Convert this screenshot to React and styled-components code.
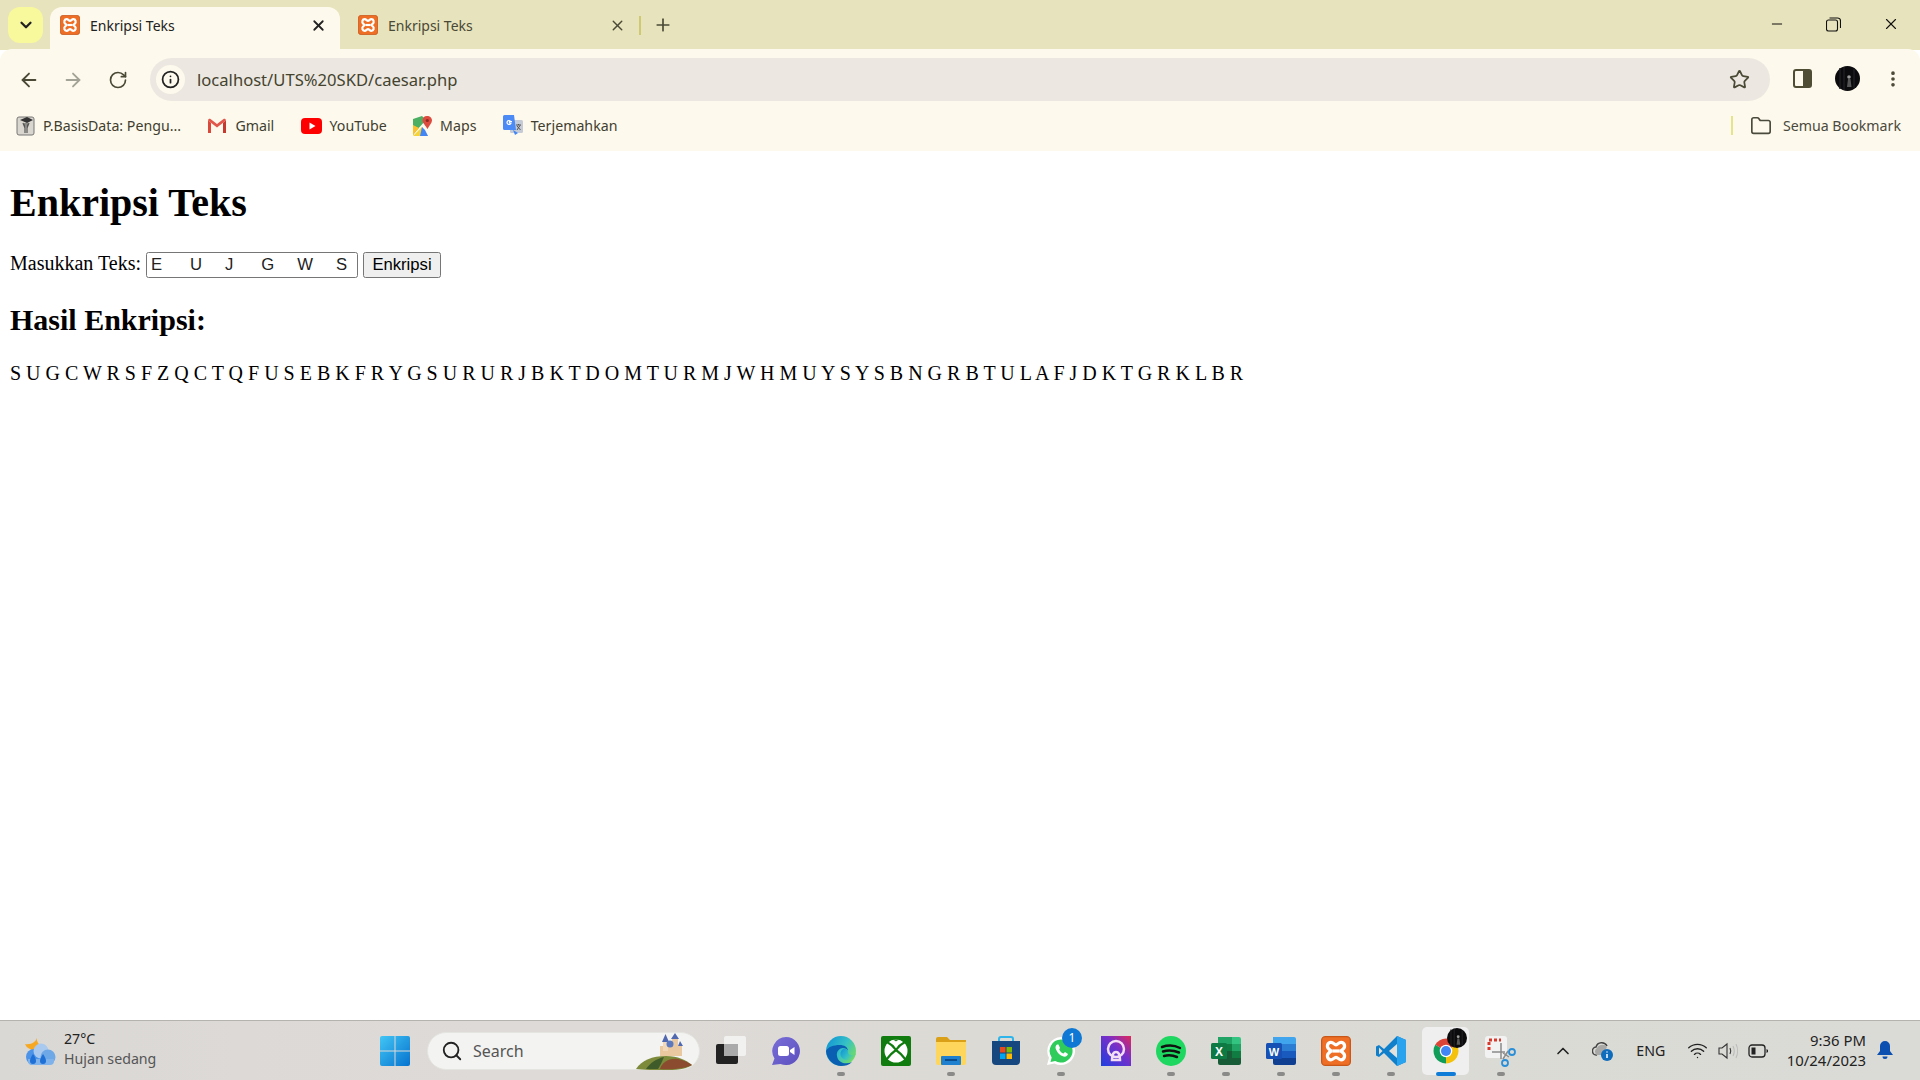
import React from 'react';
import styled, { createGlobalStyle } from 'styled-components';
import {
  ArrowLeft, ArrowRight, RotateCw, Info, Star, X, Plus, ChevronDown, ChevronUp,
  Minus, Folder, Search, Wifi, EllipsisVertical,
} from 'lucide-react';

const GlobalStyle = createGlobalStyle`
  html, body { margin: 0; padding: 0; height: 100%; background: #fff; }
  body { font-family: "Liberation Serif", "Times New Roman", serif; font-size: 20px; color: #000; }
  #root { height: 100%; }
`;

const UI_FONT = '"Noto Sans", "Open Sans", sans-serif';
const OUTPUT = 'S U G C W R S F Z Q C T Q F U S E B K F R Y G S U R U R J B K T D O M T U R M J W H M U Y S Y S B N G R B T U L A F J D K T G R K L B R';

/* ---------- drawn icons ---------- */

const Xampp = ({ size }) => (
  <svg width={size} height={size} viewBox="0 0 24 24">
    <rect x="0.5" y="0.5" width="23" height="23" rx="3" fill="#EE6E25" stroke="#C9571A" />
    <path d="M8 5c2 0 2.500 2 4 2s2-2 4-2c2.800 0 3.800 3.500 1.700 5.500-.8.8-1.700 1-1.700 1.500s.9.7 1.700 1.500c2.100 2 1.100 5.500-1.700 5.500-2 0-2.500-2-4-2s-2 2-4 2c-2.800 0-3.800-3.500-1.700-5.500.8-.8 1.700-1 1.700-1.500s-.9-.7-1.700-1.500C4.200 8.500 5.200 5 8 5Z" fill="none" stroke="#fff" strokeWidth="2.600" />
    <path d="M9 12h6" stroke="#fff" strokeWidth="2.600" />
  </svg>
);

const Scholar = () => (
  <svg width="19" height="21" viewBox="0 0 19 21">
    <rect x="1" y="2" width="17" height="18" rx="2" fill="#D8D6CE" stroke="#777" />
    <path d="M4 5l7-3 6 3-6 3z" fill="#333" />
    <path d="M9 8v10M11 8v10M7 8l2 5M13 8l-2 5" stroke="#555" strokeWidth="1.200" />
  </svg>
);

const Gmail = () => (
  <svg width="20" height="16" viewBox="0 0 20 16">
    <path d="M1 15V2.500l3 2.200V15z" fill="#D9483B" />
    <path d="M19 15V2.500l-3 2.200V15z" fill="#C5392E" />
    <path d="M1 2.500C1 1 2.500.5 3.500 1L10 6l6.500-5c1-.5 2.500 0 2.500 1.500L10 9.500z" fill="#E2574C" />
  </svg>
);

const Youtube = () => (
  <svg width="21" height="16" viewBox="0 0 21 16">
    <rect width="21" height="16" rx="4" fill="#F00" />
    <path d="M8.500 4.500v7l6-3.500z" fill="#fff" />
  </svg>
);

const Maps = () => (
  <svg width="19" height="20" viewBox="0 0 19 20">
    <path d="M0 3l9-3 4 4L3 15l-3 4z" fill="#4CAF62" />
    <path d="M0 19V9l6 3z" fill="#FBC02D" />
    <path d="M0 20l9-9 6 9z" fill="#F5D33F" />
    <path d="M9 11l3 3 3 6H7z" fill="#4285F4" />
    <path d="M14 0c3 0 5 2 5 4.500S16 10 14.500 13C13 10 9.500 7 9.500 4.500S11 0 14 0z" fill="#DD4B3E" />
    <circle cx="14.300" cy="4.500" r="1.600" fill="#8E2A20" />
  </svg>
);

const Translate = () => (
  <svg width="20" height="21" viewBox="0 0 20 21">
    <rect x="7" y="5" width="13" height="13" rx="1.500" fill="#C4CBD6" />
    <path d="M10 15l2 5 3-2z" fill="#4285F4" />
    <path d="M1.500 0h9.500l2 15H1.500A1.500 1.500 0 0 1 0 13.500v-12A1.500 1.500 0 0 1 1.500 0z" fill="#4C8BF5" />
    <path d="M9 6.500H6.500v1.500H8a2 2 0 1 1-.6-2" fill="none" stroke="#fff" strokeWidth="1.200" />
    <path d="M13 10h5M15.500 9v1M14 15l3-4.500M14 11l3.500 4" stroke="#555" strokeWidth="1" fill="none" />
  </svg>
);

const SidePanel = () => (
  <svg width="19" height="19" viewBox="0 0 19 19">
    <rect x="1" y="1" width="17" height="17" rx="2" fill="#FDF9EC" stroke="#4F4D33" strokeWidth="2" />
    <rect x="10" y="1" width="8" height="17" fill="#4F4D33" />
  </svg>
);

const Avatar = ({ size }) => (
  <svg width={size} height={size} viewBox="0 0 25 25">
    <circle cx="12.500" cy="12.500" r="12.500" fill="#0B0B0D" />
    <path d="M5 2v21M9 1v23M19 3v19" stroke="#1E1E22" strokeWidth="1.500" />
    <circle cx="14" cy="11" r="1.800" fill="#999" />
    <path d="M12 21l1-8h2.500l1 8z" fill="#555" />
  </svg>
);

const MaxIcon = () => (
  <svg width="15" height="15" viewBox="0 0 15 15" fill="none" stroke="#111" strokeWidth="1.100">
    <rect x="0.500" y="3" width="11" height="11" rx="2" />
    <path d="M3.500 1h8a3 3 0 0 1 3 3v7" />
  </svg>
);

const Weather = () => (
  <svg width="32" height="32" viewBox="0 0 32 32">
    <path d="M13 1c-1 5 1 9 6 10-2 4-8 6-13 3-3-1-4-3-5-5 6 1 12-2 12-8z" fill="#F7A823" />
    <circle cx="10" cy="22" r="8" fill="#4D94E8" />
    <circle cx="17" cy="16" r="7.500" fill="#A9C9EE" />
    <circle cx="24" cy="22" r="7.500" fill="#6FA8E6" />
    <path d="M4 24h26v2a4 4 0 0 1-4 4H8a4 4 0 0 1-4-4z" fill="#7FB2EA" />
    <path d="M9 19c2 3 3 5 3 7a3 3 0 0 1-6 0c0-2 1-4 3-7zM19 19c2 3 3 5 3 7a3 3 0 0 1-6 0c0-2 1-4 3-7z" fill="#1E6FD6" />
  </svg>
);

const WinLogo = () => (
  <svg width="30" height="30" viewBox="0 0 30 30">
    <defs>
      <linearGradient id="win" x1="0" y1="0" x2="1" y2="1">
        <stop offset="0" stopColor="#42C6F5" />
        <stop offset="1" stopColor="#0672CE" />
      </linearGradient>
    </defs>
    <path d="M2 0h12.500v14.500H0V2a2 2 0 0 1 2-2zM15.500 0H28a2 2 0 0 1 2 2v12.500H15.500zM0 15.500h14.500V30H2a2 2 0 0 1-2-2zM15.500 15.500H30V28a2 2 0 0 1-2 2H15.500z" fill="url(#win)" />
  </svg>
);

const Castle = () => (
  <svg width="60" height="38" viewBox="0 0 60 38">
    <path d="M2 37C8 28 18 24 32 24c12 0 20 4 26 9-4 3-12 5-24 5-14 0-24 0-32-1z" fill="#7C8A3A" />
    <path d="M26 37c2-6 8-11 18-10 5 1 10 3 14 6-6 3-18 5-32 4z" fill="#8A4B2E" />
    <path d="M12 37c4-6 10-10 18-12-2 5-4 9-6 12z" fill="#3F5B2A" />
    <path d="M26 14h22v10H26z" fill="#EBC9A0" />
    <rect x="29" y="9" width="5" height="10" fill="#F0D8B8" />
    <rect x="38" y="6" width="6" height="13" fill="#E8C8A2" />
    <path d="M28 10l3.500-8L35 10zM37 7l4-6 4 6zM44 14l2-5 3 5z" fill="#5068B0" />
    <circle cx="36" cy="12" r="3.500" fill="#5C78BE" />
  </svg>
);

const TaskView = () => (
  <svg width="30" height="30" viewBox="0 0 30 30">
    <rect x="0" y="8" width="22" height="20" rx="2" fill="#222" />
    <rect x="8" y="0" width="22" height="20" rx="2" fill="#F4F4F4" opacity="0.85" />
    <rect x="8" y="8" width="14" height="12" fill="#AAA" />
  </svg>
);

const Teams = () => (
  <svg width="30" height="30" viewBox="0 0 30 30">
    <defs>
      <linearGradient id="teams" x1="0" y1="0" x2="1" y2="1">
        <stop offset="0" stopColor="#7A6FD8" />
        <stop offset="1" stopColor="#5B4FBF" />
      </linearGradient>
    </defs>
    <path d="M15 1a14 14 0 1 1-5.500 26.900L1 29l2.500-6.500A14 14 0 0 1 15 1z" fill="url(#teams)" />
    <rect x="7" y="10" width="11" height="10" rx="2.500" fill="#fff" />
    <path d="M19 14l4.500-3v8L19 16z" fill="#fff" />
  </svg>
);

const Edge = () => (
  <svg width="30" height="30" viewBox="0 0 30 30">
    <defs>
      <linearGradient id="edge" x1="0" y1="0" x2="1" y2="0.600">
        <stop offset="0" stopColor="#0D8FD8" />
        <stop offset="0.600" stopColor="#35C1C6" />
        <stop offset="1" stopColor="#6FDB6A" />
      </linearGradient>
    </defs>
    <circle cx="15" cy="15" r="15" fill="url(#edge)" />
    <path d="M0 15C1 25 9 30 15 30c4 0 8-1 11-4-6 3-14 1-15-6-1-5 3-8 6-8 4 0 5 3 5 3 0-4-4-6-8-6C7 9 2 11 0 15z" fill="#0B5FB3" />
    <path d="M17 13c3-1 5 1 5 3 0 3 3 3 5 3 1 0 2-1 3-2-1 5-6 8-10 7-5-1-8-7-3-11z" fill="url(#edge)" />
  </svg>
);

const Xbox = () => (
  <svg width="30" height="30" viewBox="0 0 30 30">
    <rect width="30" height="30" rx="2" fill="#107C10" />
    <circle cx="15" cy="15" r="11.500" fill="#fff" />
    <path d="M6 6c4 2 7 5 9 8 2-3 5-6 9-8M5 24c3-4 7-8 10-10 3 2 7 6 10 10" fill="none" stroke="#107C10" strokeWidth="2.200" />
    <path d="M11 3.500c1.500 0 3 1 4 2 1-1 2.500-2 4-2z" fill="#107C10" />
  </svg>
);

const Explorer = () => (
  <svg width="30" height="28" viewBox="0 0 30 28">
    <path d="M0 2a2 2 0 0 1 2-2h9l3 3h16v7H0z" fill="#D9A018" />
    <path d="M0 5h30v21a2 2 0 0 1-2 2H2a2 2 0 0 1-2-2z" fill="#FFD65C" />
    <rect x="5" y="19" width="20" height="9" rx="1" fill="#1F80D0" />
    <rect x="9" y="22" width="12" height="2" fill="#0B4C8C" />
  </svg>
);

const Store = () => (
  <svg width="30" height="30" viewBox="0 0 30 30">
    <path d="M8 6V3a2 2 0 0 1 2-2h10a2 2 0 0 1 2 2v3" fill="none" stroke="#2FB5EA" strokeWidth="2" />
    <path d="M1 5h28v20a4 4 0 0 1-4 4H5a4 4 0 0 1-4-4z" fill="#17477F" />
    <rect x="9" y="11" width="5.500" height="5.500" fill="#E8491D" />
    <rect x="15.500" y="11" width="5.500" height="5.500" fill="#7FBA00" />
    <rect x="9" y="17.500" width="5.500" height="5.500" fill="#00A4EF" />
    <rect x="15.500" y="17.500" width="5.500" height="5.500" fill="#FFB900" />
  </svg>
);

const Whatsapp = () => (
  <svg width="30" height="30" viewBox="0 0 30 30">
    <path d="M15 1a14 14 0 1 1-6.500 26.400L1 29l2-7.200A14 14 0 0 1 15 1z" fill="#fff" />
    <path d="M15 3.500a11.500 11.500 0 1 1-5.800 21.400L4.500 26l1.200-4.500A11.500 11.500 0 0 1 15 3.500z" fill="#2FCB5B" />
    <path d="M11 8.500c-1.500 1-2 3-1 5 1.500 3.500 4 6 7.500 7 2 .5 4-.5 4.500-2.500l-3-2-1.500 1.500c-2-.7-3.500-2.200-4.300-4.300L14 12l-1.500-3.500z" fill="#fff" />
  </svg>
);

const Podcast = () => (
  <svg width="30" height="30" viewBox="0 0 30 30">
    <defs>
      <linearGradient id="pod" x1="0" y1="1" x2="1" y2="0">
        <stop offset="0" stopColor="#1C3FE0" />
        <stop offset="0.600" stopColor="#7A2FC8" />
        <stop offset="1" stopColor="#E0285A" />
      </linearGradient>
    </defs>
    <rect width="30" height="30" fill="url(#pod)" />
    <circle cx="15" cy="13" r="8" fill="none" stroke="#F2DDF5" strokeWidth="2.500" />
    <path d="M11 24c0-5 1.500-8 4-8s4 3 4 8z" fill="none" stroke="#F2DDF5" strokeWidth="2.500" />
  </svg>
);

const Spotify = () => (
  <svg width="30" height="30" viewBox="0 0 30 30">
    <circle cx="15" cy="15" r="15" fill="#1ED760" />
    <path d="M6 11c6-2 13-1.500 18 1M7 15.500c5-1.500 11-1 16 1M8 20c4-1 9-.7 13 1" fill="none" stroke="#111" strokeWidth="2.500" strokeLinecap="round" />
  </svg>
);

const Excel = () => (
  <svg width="30" height="30" viewBox="0 0 30 30">
    <path d="M7 1h14v7H7z" fill="#21A366" />
    <path d="M21 1h7a2 2 0 0 1 2 2v5h-9z" fill="#33C481" />
    <path d="M7 8h14v7H7z" fill="#107C41" />
    <path d="M21 8h9v7h-9z" fill="#21A366" />
    <path d="M7 15h14v7H7z" fill="#185C37" />
    <path d="M21 15h9v7h-9z" fill="#107C41" />
    <path d="M7 22h23v5a2 2 0 0 1-2 2H9a2 2 0 0 1-2-2z" fill="#185C37" />
    <rect x="0" y="7" width="16" height="16" rx="1.500" fill="#0E7A43" />
    <text x="8" y="19.500" textAnchor="middle" fontFamily="'Liberation Sans', sans-serif" fontSize="12" fontWeight="700" fill="#fff">X</text>
  </svg>
);

const Word = () => (
  <svg width="30" height="30" viewBox="0 0 30 30">
    <path d="M7 1h21a2 2 0 0 1 2 2v5H7z" fill="#41A5EE" />
    <path d="M7 8h23v7H7z" fill="#2B7CD3" />
    <path d="M7 15h23v7H7z" fill="#185ABD" />
    <path d="M7 22h23v5a2 2 0 0 1-2 2H9a2 2 0 0 1-2-2z" fill="#103F91" />
    <rect x="0" y="7" width="16" height="16" rx="1.500" fill="#1650B4" />
    <text x="8" y="19.500" textAnchor="middle" fontFamily="'Liberation Sans', sans-serif" fontSize="11" fontWeight="700" fill="#fff">W</text>
  </svg>
);

const VsCode = () => (
  <svg width="30" height="30" viewBox="0 0 30 30">
    <path d="M21 0l9 4v22l-9 4L8 17l-5 4-3-1.500v-9L3 9l5 4z" fill="#0F7FCC" />
    <path d="M21 0l9 4v22l-9 4z" fill="#2AA3EF" />
    <path d="M21 8l-8 7 8 7z" fill="#E4E1DC" />
    <path d="M3 11.500V18.500L6.500 15z" fill="#E4E1DC" />
  </svg>
);

const ChromeLogo = () => (
  <svg width="30" height="30" viewBox="0 0 48 48">
    <path d="M24 24L6.700 14A20 20 0 0 1 41.300 14Z" fill="#DB4437" />
    <path d="M24 24L41.300 14A20 20 0 0 1 24 44Z" fill="#F4C20D" />
    <path d="M24 24L24 44A20 20 0 0 1 6.700 14Z" fill="#0F9D58" />
    <circle cx="24" cy="24" r="10" fill="#fff" />
    <circle cx="24" cy="24" r="8" fill="#4285F4" />
  </svg>
);

const Snip = () => (
  <svg width="32" height="32" viewBox="0 0 32 32">
    <rect x="0" y="1" width="22" height="22" rx="3" fill="#F2F2F2" />
    <path d="M4 15V5h12" fill="none" stroke="#D9392C" strokeWidth="3" strokeDasharray="3 2" />
    <path d="M16 8v16M7 17h13" stroke="#8A8A8A" strokeWidth="1.500" />
    <path d="M18 18l6 4M18 24l5-8" stroke="#8C8C8C" strokeWidth="1.500" />
    <circle cx="27" cy="17" r="3" fill="none" stroke="#2B8FD8" strokeWidth="1.800" />
    <circle cx="20" cy="28" r="3" fill="none" stroke="#2B8FD8" strokeWidth="1.800" />
  </svg>
);

const CloudInfo = () => (
  <svg width="21" height="21" viewBox="0 0 21 21">
    <path d="M5 15a4 4 0 0 1-1-8 6 6 0 0 1 11-1" fill="none" stroke="#444" strokeWidth="1.500" />
    <path d="M5 15a4 4 0 0 1 0-7c2-4 8-4 10-1l-4 8z" fill="#A8A8A6" />
    <circle cx="15" cy="15" r="6" fill="#0F6CBD" />
    <path d="M15 14v4M15 11.500v1" stroke="#fff" strokeWidth="1.500" />
  </svg>
);

const Speaker = () => (
  <svg width="21" height="18" viewBox="0 0 21 18" fill="none" stroke="#333" strokeWidth="1.100">
    <path d="M1 6h3l5-4v14l-5-4H1z" />
    <path d="M12 6c1 2 1 4 0 6" />
    <path d="M15 4c1.500 3 1.500 7 0 10M18 2c2 4 2 10 0 14" stroke="#BBB" />
  </svg>
);

const BatteryIcon = () => (
  <svg width="21" height="14" viewBox="0 0 21 14">
    <rect x="1" y="1" width="16" height="12" rx="3" fill="none" stroke="#222" strokeWidth="1.300" />
    <rect x="3.500" y="3.500" width="4" height="7" fill="#222" />
    <path d="M18.500 5l1.500 1v2l-1.500 1z" fill="#222" />
  </svg>
);

const Bell = () => (
  <svg width="16" height="19" viewBox="0 0 16 19">
    <path d="M8 0a5 5 0 0 1 5 5v5l3 4H0l3-4V5a5 5 0 0 1 5-5zM5.500 15.500h5a2.500 2.500 0 0 1-5 0z" fill="#0B4FB0" />
  </svg>
);

/* ---------- browser chrome ---------- */

const Browser = styled.header`
  flex: 0 0 auto;
  font-family: ${UI_FONT};
  color: #35342a;
`;

const TabStrip = styled.div`
  height: 50px;
  background: #e7e3bc;
  display: flex;
  align-items: flex-end;
  padding-left: 8px;
`;

const TabSearch = styled.div`
  width: 35px;
  height: 36px;
  margin: 0 7px 7px 0;
  border-radius: 12px;
  background: #f8f89c;
  display: flex;
  align-items: center;
  justify-content: center;
`;

const Tab = styled.div`
  width: ${p => p.$width}px;
  height: 43px;
  box-sizing: border-box;
  padding: 0 13px 7px ${p => (p.$active ? 10 : 18)}px;
  display: flex;
  align-items: center;
  gap: 10px;
  font-size: 14px;
  border-radius: 12px 12px 0 0;
  background: ${p => (p.$active ? '#fdf9ec' : 'transparent')};
  color: ${p => (p.$active ? '#222' : '#4a4936')};
`;

const TabTitle = styled.span`
  flex: 1;
`;

const TabDivider = styled.div`
  width: 2px;
  height: 19px;
  margin: 0 12px 15px 0;
  background: #cfca72;
`;

const NewTab = styled.div`
  height: 43px;
  box-sizing: border-box;
  padding-bottom: 7px;
  display: flex;
  align-items: center;
  flex: 1;
  color: #4a4936;
`;

const WindowControls = styled.div`
  display: flex;
  align-self: flex-start;
  height: 50px;
  align-items: center;
  padding-right: 20px;
  padding-bottom: 2px;
  box-sizing: border-box;
  gap: 41px;
`;

const Toolbar = styled.div`
  height: 61px;
  background: #fdf9ec;
  display: flex;
  align-items: center;
  padding-left: 18px;
  border-radius: 12px 12px 0 0;
  margin-top: -1px;
`;

const NavButton = styled.div`
  width: ${p => p.$width}px;
  display: flex;
  color: ${p => p.$color || '#4a4936'};
`;

const Omnibox = styled.div`
  width: 1620px;
  height: 43px;
  margin-left: 4px;
  box-sizing: border-box;
  padding: 0 20px 0 6px;
  border-radius: 22px;
  background: #ece8e1;
  display: flex;
  align-items: center;
`;

const SiteInfo = styled.div`
  width: 29px;
  height: 29px;
  border-radius: 50%;
  background: #fdf9ec;
  display: flex;
  align-items: center;
  justify-content: center;
  margin-right: 12px;
  color: #222;
`;

const Url = styled.span`
  flex: 1;
  font-size: 16.600px;
  color: #44432f;
`;

const ToolbarRight = styled.div`
  flex: 1;
  display: flex;
  align-items: center;
  padding: 0 0 2px 23px;
  gap: 23px;
`;

const BookmarkBar = styled.div`
  height: 41px;
  box-sizing: border-box;
  padding: 0 19px 10px 16px;
  background: #fdf9ec;
  display: flex;
  align-items: center;
  font-size: 14.200px;
  color: #3f3e30;
`;

const Bookmark = styled.div`
  display: flex;
  align-items: center;
  gap: 8px;
  margin-right: 26.250px;
`;

const BookmarkEnd = styled.div`
  margin-left: auto;
  display: flex;
  align-items: center;
  gap: 11px;
  color: #4a4a3c;
`;

const BarDivider = styled.div`
  width: 2px;
  height: 19px;
  margin-right: 6px;
  background: #e4e48a;
`;

/* ---------- page content ---------- */

const Page = styled.main`
  flex: 1;
  min-height: 0;
  padding: 0 10px;
  overflow: hidden;
  background: #fff;
`;

const Title = styled.h1`
  margin: 28.500px 0 26px;
  font-size: 40px;
  line-height: 46px;
`;

const EncryptForm = styled.form`
  margin: 0;
  line-height: 23px;
`;

const TextInput = styled.input`
  width: 212px;
  height: 26px;
  box-sizing: border-box;
  padding: 1px 4px;
  border: 1px solid #767676;
  border-radius: 2.500px;
  font-family: "Liberation Sans", Arial, sans-serif;
  font-size: 16.670px;
  color: #222;
`;

const SubmitButton = styled.button`
  width: 78px;
  height: 26px;
  box-sizing: border-box;
  padding: 0;
  border: 1px solid #767676;
  border-radius: 2.500px;
  background: #efefef;
  font-family: "Liberation Sans", Arial, sans-serif;
  font-size: 16.670px;
  color: #000;
`;

const ResultHeading = styled.h2`
  margin: 25px 0;
  font-size: 30px;
  line-height: 34px;
`;

const ResultText = styled.p`
  margin: 0;
  line-height: 23px;
`;

/* ---------- taskbar ---------- */

const Taskbar = styled.footer`
  flex: 0 0 auto;
  height: 60px;
  box-sizing: border-box;
  border-top: 1px solid #b5b3ae;
  background: linear-gradient(90deg, #dad8d4, #dedad8 25%, #dcdad5 50%, #dadbd6);
  display: flex;
  align-items: center;
  font-family: ${UI_FONT};
  color: #222;
  font-size: 14.200px;
`;

const WeatherWidget = styled.div`
  width: 367px;
  box-sizing: border-box;
  padding-left: 24px;
  display: flex;
  align-items: center;
  gap: 8px;
`;

const WeatherText = styled.div`
  line-height: 20px;
  padding-bottom: 4px;
`;

const WeatherSub = styled.div`
  color: #555;
`;

const Slot = styled.div`
  position: relative;
  width: 55px;
  height: 48px;
  flex: 0 0 55px;
  display: flex;
  align-items: center;
  justify-content: center;
`;

const ActiveTile = styled(Slot)`
  &::before {
    content: '';
    position: absolute;
    left: 4px;
    top: 0;
    width: 47px;
    height: 48px;
    border-radius: 5px;
    background: #eeefee;
  }
  & > svg { position: relative; }
`;

const RunDot = styled.span`
  position: absolute;
  left: 50%;
  bottom: -1px;
  margin-left: ${p => (p.$active ? -10 : -4)}px;
  width: ${p => (p.$active ? 20 : 8)}px;
  height: 4px;
  border-radius: 2px;
  background: ${p => (p.$active ? '#0F7CD8' : '#8a8a88')};
`;

const Badge = styled.span`
  position: absolute;
  left: 29px;
  top: 1px;
  width: 20px;
  height: 20px;
  border-radius: 50%;
  background: #0F78D4;
  color: #fff;
  font-size: 12px;
  line-height: 20px;
  text-align: center;
`;

const AvatarBadge = styled.span`
  position: absolute;
  left: 29px;
  top: 1px;
  display: flex;
`;

const SearchBox = styled.div`
  width: 273px;
  height: 38px;
  margin: 0 3px 0 5px;
  box-sizing: border-box;
  padding: 0 5px 0 13px;
  flex: 0 0 auto;
  border-radius: 19px;
  background: #f3f3f1;
  border: 1px solid #e4e4e0;
  display: flex;
  align-items: center;
  gap: 10px;
  font-size: 16px;
  color: #555;
`;

const SearchLabel = styled.span`
  flex: 1;
`;

const Tray = styled.div`
  flex: 1;
  display: flex;
  align-items: center;
  justify-content: flex-end;
  padding-right: 27px;
`;

const TrayItem = styled.div`
  display: flex;
  align-items: center;
  margin-right: ${p => p.$gap}px;
`;

const Clock = styled.div`
  text-align: right;
  line-height: 20px;
  font-size: 14.900px;
  margin-right: 11px;
  padding-bottom: 2px;
`;

const TaskApp = ({ children, running, badge }) => (
  <Slot>
    {children}
    {badge && <Badge>{badge}</Badge>}
    {running && <RunDot />}
  </Slot>
);

const bookmarks = [
  { icon: <Scholar />, label: 'P.BasisData: Pengu...' },
  { icon: <Gmail />, label: 'Gmail' },
  { icon: <Youtube />, label: 'YouTube' },
  { icon: <Maps />, label: 'Maps' },
  { icon: <Translate />, label: 'Terjemahkan' },
];

const Root = styled.div`
  height: 100%;
  display: flex;
  flex-direction: column;
  overflow: hidden;
`;

const App = () => (
  <Root>
    <GlobalStyle />
    <Browser>
      <TabStrip>
        <TabSearch><ChevronDown size={18} strokeWidth={3} color="#222" /></TabSearch>
        <Tab $active $width={290}>
          <Xampp size={20} />
          <TabTitle>Enkripsi Teks</TabTitle>
          <X size={17} strokeWidth={2.500} color="#222" />
        </Tab>
        <Tab $width={299}>
          <Xampp size={20} />
          <TabTitle>Enkripsi Teks</TabTitle>
          <X size={17} strokeWidth={2} />
        </Tab>
        <TabDivider />
        <NewTab><Plus size={20} strokeWidth={2} /></NewTab>
        <WindowControls>
          <Minus size={16} strokeWidth={1.500} color="#111" />
          <MaxIcon />
          <X size={18} strokeWidth={1.500} color="#111" />
        </WindowControls>
      </TabStrip>
      <Toolbar>
        <NavButton $width={44}><ArrowLeft size={22} /></NavButton>
        <NavButton $width={46} $color="#a3a296"><ArrowRight size={22} /></NavButton>
        <NavButton $width={38}><RotateCw size={20} /></NavButton>
        <Omnibox>
          <SiteInfo><Info size={19} strokeWidth={2.200} /></SiteInfo>
          <Url>localhost/UTS%20SKD/caesar.php</Url>
          <Star size={21} strokeWidth={2} color="#4a4936" />
        </Omnibox>
        <ToolbarRight>
          <SidePanel />
          <Avatar size={25} />
          <NavButton $width={20}><EllipsisVertical size={22} strokeWidth={2.400} /></NavButton>
        </ToolbarRight>
      </Toolbar>
      <BookmarkBar>
        {bookmarks.map(b => (
          <Bookmark key={b.label}>{b.icon}{b.label}</Bookmark>
        ))}
        <BookmarkEnd>
          <BarDivider />
          <Folder size={22} strokeWidth={1.800} />
          Semua Bookmark
        </BookmarkEnd>
      </BookmarkBar>
    </Browser>

    <Page>
      <Title>Enkripsi Teks</Title>
      <EncryptForm onSubmit={e => e.preventDefault()}>
        <label htmlFor="teks">Masukkan Teks:</label>{' '}
        <TextInput id="teks" type="text" defaultValue="E      U     J      G     W     S" />{' '}
        <SubmitButton type="submit">Enkripsi</SubmitButton>
      </EncryptForm>
      <ResultHeading>Hasil Enkripsi:</ResultHeading>
      <ResultText>{OUTPUT}</ResultText>
    </Page>

    <Taskbar>
      <WeatherWidget>
        <Weather />
        <WeatherText>
          <div>27°C</div>
          <WeatherSub>Hujan sedang</WeatherSub>
        </WeatherText>
      </WeatherWidget>
      <TaskApp><WinLogo /></TaskApp>
      <SearchBox>
        <Search size={22} strokeWidth={2} color="#222" />
        <SearchLabel>Search</SearchLabel>
        <Castle />
      </SearchBox>
      <TaskApp><TaskView /></TaskApp>
      <TaskApp><Teams /></TaskApp>
      <TaskApp running><Edge /></TaskApp>
      <TaskApp><Xbox /></TaskApp>
      <TaskApp running><Explorer /></TaskApp>
      <TaskApp><Store /></TaskApp>
      <TaskApp running badge="1"><Whatsapp /></TaskApp>
      <TaskApp><Podcast /></TaskApp>
      <TaskApp running><Spotify /></TaskApp>
      <TaskApp running><Excel /></TaskApp>
      <TaskApp running><Word /></TaskApp>
      <TaskApp running><Xampp size={30} /></TaskApp>
      <TaskApp running><VsCode /></TaskApp>
      <ActiveTile>
        <ChromeLogo />
        <AvatarBadge><Avatar size={20} /></AvatarBadge>
        <RunDot $active />
      </ActiveTile>
      <TaskApp running><Snip /></TaskApp>
      <Tray>
        <TrayItem $gap={19}><ChevronUp size={20} strokeWidth={2} color="#222" /></TrayItem>
        <TrayItem $gap={23}><CloudInfo /></TrayItem>
        <TrayItem $gap={22}>ENG</TrayItem>
        <TrayItem $gap={10}><Wifi size={21} strokeWidth={1.600} color="#222" /></TrayItem>
        <TrayItem $gap={9}><Speaker /></TrayItem>
        <TrayItem $gap={17.500}><BatteryIcon /></TrayItem>
        <Clock>
          <div>9:36 PM</div>
          <div>10/24/2023</div>
        </Clock>
        <Bell />
      </Tray>
    </Taskbar>
  </Root>
);

export default App;
